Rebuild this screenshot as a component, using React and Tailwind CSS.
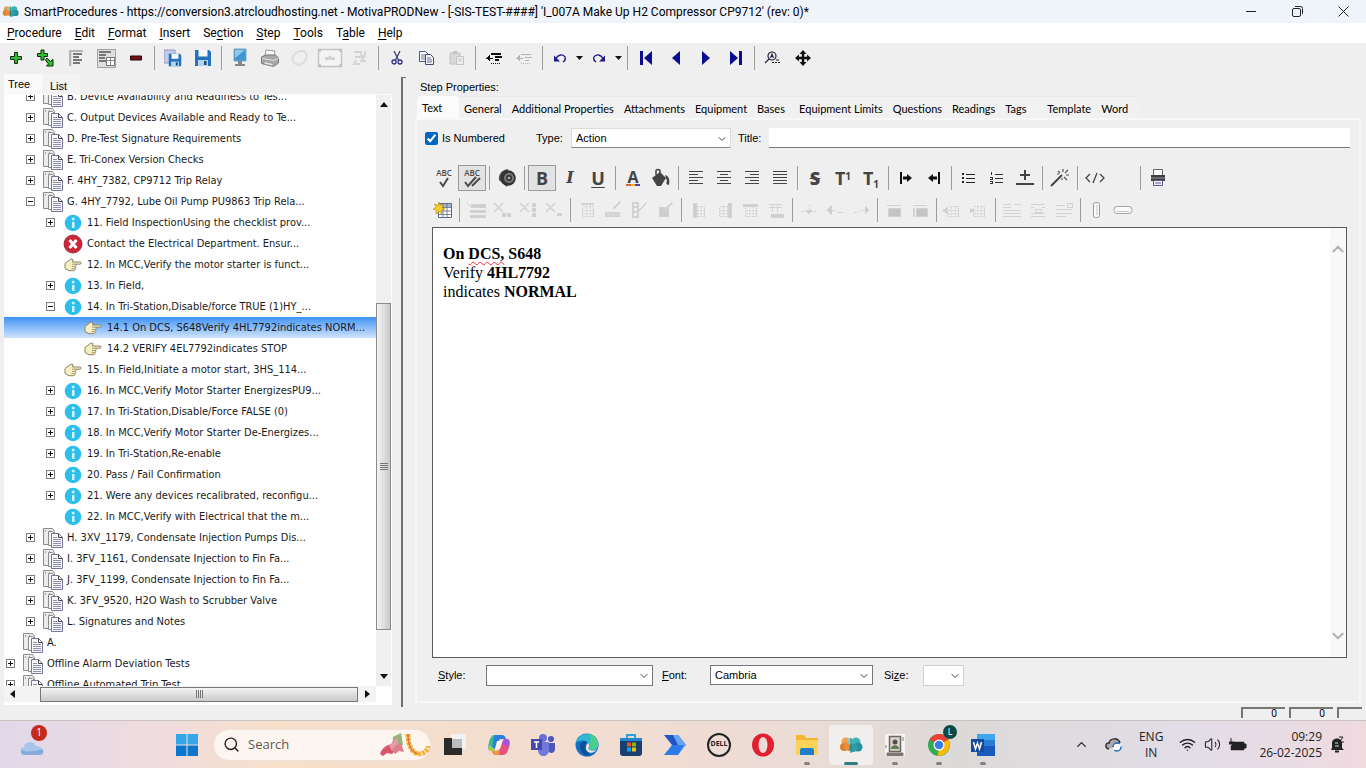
import React, { useState } from "react";
import { ChevronDown, ChevronUp, Search, Volume2, Wifi } from "lucide-react";

const Svg = ({ w = 20, h = 20, children, ...rest }) => (
  <svg width={w} height={h} viewBox={`0 0 ${w} ${h}`} fill="none" aria-hidden="true" {...rest}>
    {children}
  </svg>
);

/* ---------- app logo ---------- */

const AppLogo = ({ w = 16, h = 12 }) => (
  <svg width={w} height={h} viewBox="0 0 24 18" aria-hidden="true">
    <circle cx="7" cy="6" r="4.500" fill="#f0a04a" />
    <circle cx="5" cy="11" r="4" fill="#d9832f" />
    <circle cx="10" cy="10" r="5" fill="#f08c3c" />
    <circle cx="11" cy="5" r="3" fill="#7fd0c4" />
    <circle cx="17" cy="6" r="4.500" fill="#3fb3b8" />
    <circle cx="19" cy="11" r="4.500" fill="#2b8fa0" />
    <circle cx="14" cy="12" r="4" fill="#2d9fa8" />
    <path d="M12 2v15" stroke="#3a7d70" strokeWidth="1" />
  </svg>
);

/* ---------- main toolbar icons ---------- */

const Plus = () => (
  <Svg w={14} h={14}>
    <path d="M5.500 1.500h3v4h4v3h-4v4h-3v-4h-4v-3h4z" fill="#2fbf2f" stroke="#0b2b0b" strokeWidth="1" />
  </Svg>
);

const PlusSub = () => (
  <Svg w={20} h={18}>
    <path d="M5 1h3v3.500h3.500v3H8V11H5V7.500H1.500v-3H5z" fill="#2fbf2f" stroke="#0b2b0b" />
    <path d="M11 9l3.500 3.500L17 10.500v6.500h-6.500l2-2L9.500 11z" fill="#2fbf2f" stroke="#0b2b0b" />
  </Svg>
);

const Outline = () => (
  <Svg w={18} h={18} shapeRendering="crispEdges">
    <path d="M2 1h14v2H4v14H2z" fill="#b4b4b4" />
    <path d="M6 5h9M6 8h6M6 11h9M6 14h7" stroke="#777" strokeWidth="1.500" />
    <path d="M4 3v14" stroke="#ddd" />
  </Svg>
);

const OutlineTable = () => (
  <Svg w={20} h={20} shapeRendering="crispEdges">
    <path d="M1 1h18v18H1z" fill="#dedede" stroke="#a2a2a2" />
    <path d="M3 4h12M3 7h7M3 10h6M3 13h7" stroke="#777" strokeWidth="1.500" />
    <path d="M10.500 9.500h8v8h-8z" fill="#fff" stroke="#777" />
    <path d="M11 12.500h8M14.500 10v8" stroke="#888" />
  </Svg>
);

const Minus = () => (
  <Svg w={12} h={6}>
    <path d="M.5 1h11v4H.5z" fill="#7a0f1c" stroke="#2a0308" />
  </Svg>
);

const Floppy = ({ back }) => (
  <Svg w={18} h={18}>
    {back && <path d="M0 1h11v13H0z" fill="#c3cae8" stroke="#8f98c4" />}
    <g transform={back ? "translate(4 4) scale(.78)" : ""}>
      <path d="M1 1h14l2 2v14H1z" fill="#2272bd" />
      <path d="M4.500 1h9v6.500h-9z" fill="#f3f7fb" />
      <path d="M4 11h10v6H4z" fill="#b9d3ea" />
      <path d="M10 12h2.500v4H10z" fill="#174c80" />
    </g>
  </Svg>
);

const Monitor = () => (
  <Svg w={16} h={20}>
    <path d="M2 1h12v12H2z" fill="#3f95cf" stroke="#7aa7c4" />
    <path d="M3 2h10L3 10z" fill="#8cc8ec" />
    <path d="M6 13h4v3H6zM3 16h10v2H3z" fill="#7d8890" />
  </Svg>
);

const Printer = () => (
  <Svg w={20} h={20}>
    <path d="M6 2l9 1-1 6H5z" fill="#fdfdfd" stroke="#999" />
    <path d="M1.500 9l4-2h10l3 3v5l-5 3.500-12-3z" fill="#a9a9a9" stroke="#777" />
    <path d="M2 10.500l12 2 4.500-2.500" stroke="#e3e3e3" />
    <path d="M4 13.500l9 2v2.500l-9-2z" fill="#e9e9e9" stroke="#888" strokeWidth=".7" />
  </Svg>
);

const GhostRing = () => (
  <Svg w={20} h={20}>
    <path d="M4 15C0 9 6 2 14 3c6 5 1 13-6 14z" stroke="#dcdcdc" strokeWidth="2" />
  </Svg>
);

const GhostFrame = () => (
  <Svg w={26} h={20}>
    <path d="M1.500 1.500h23v17h-23z" stroke="#c4c4c4" strokeWidth="1.500" fill="#f4f4f4" />
    <path d="M8 9h3l2-2 2 2h3v3H8z" fill="#d2d2d2" />
    <path d="M3 1v3M23 1v3M3 16v3M23 16v3" stroke="#aaa" />
  </Svg>
);

const GhostSwap = () => (
  <Svg w={18} h={18}>
    <path d="M3 3h7v4M14 2v5h-4M4 8h9l-3 4h5M5 11l-2 4h6" stroke="#d4d4d4" strokeWidth="1.800" />
  </Svg>
);

const Cut = () => (
  <Svg w={12} h={16}>
    <path d="M3 1l4.500 9M9 1L4.500 10" stroke="#3b3f63" strokeWidth="1.300" />
    <circle cx="3" cy="12" r="2" stroke="#2a2a8c" strokeWidth="1.300" />
    <circle cx="9" cy="12" r="2" stroke="#2a2a8c" strokeWidth="1.300" />
  </Svg>
);

const Copy = () => (
  <Svg w={18} h={16}>
    <path d="M1.500 1.500h6l3 3v7h-9z" fill="#f4f4fb" stroke="#555a78" />
    <path d="M3 5h5M3 7h5M3 9h4" stroke="#7d82a0" />
    <path d="M7.500 4.500h5l3 3v7h-8z" fill="#f4f4fb" stroke="#44496c" />
    <path d="M9 8h4M9 10h5M9 12h5" stroke="#6b7095" />
  </Svg>
);

const Paste = () => (
  <Svg w={18} h={16}>
    <path d="M2 3h10v11H2z" fill="#d9d9d9" stroke="#c4c4c4" />
    <path d="M5 1h4v3H5z" fill="#c4c4c4" />
    <path d="M8.500 6.500h7v8h-7z" fill="#efefef" stroke="#c4c4c4" />
    <path d="M10 9h4M10 11h4" stroke="#c9c9c9" />
  </Svg>
);

const Outdent = ({ faded }) => (
  <Svg w={18} h={14} shapeRendering="crispEdges">
    <g stroke={faded ? "#b5b5b5" : "#111"}>
      <path d="M6 3h10M10 6h7M10 9h4" strokeWidth={faded ? "1" : "2"} />
      <path d="M6 12h9" strokeDasharray="1 1" />
      <path d="M1 7h7" />
      <path d="M4.500 4v6L1 7z" fill={faded ? "#b5b5b5" : "#111"} stroke="none" />
    </g>
  </Svg>
);

const Undo = ({ flip }) => (
  <Svg w={14} h={12} transform={flip ? "scale(-1 1)" : undefined}>
    <path d="M3 6.500C5 2.500 10 1.500 12 5c.8 2-.3 4-2 5" stroke="#1b1b8c" strokeWidth="1.400" />
    <path d="M1 3.500V9.500H7z" fill="#1b1b8c" />
  </Svg>
);

const Caret = () => (
  <Svg w={7} h={4}>
    <path d="M0 0h7L3.500 4z" fill="#111" />
  </Svg>
);

const NavFirst = () => (
  <Svg w={14} h={14}>
    <path d="M1 0h3v14H1zM13 0v14L5 7z" fill="#0c0c8f" />
  </Svg>
);
const NavPrev = () => (
  <Svg w={14} h={14}>
    <path d="M11 0v14L3 7z" fill="#0c0c8f" />
  </Svg>
);
const NavNext = () => (
  <Svg w={14} h={14}>
    <path d="M3 0v14l8-7z" fill="#0c0c8f" />
  </Svg>
);
const NavLast = () => (
  <Svg w={14} h={14}>
    <path d="M10 0h3v14h-3zM1 0v14l8-7z" fill="#0c0c8f" />
  </Svg>
);

const FindText = () => (
  <Svg w={18} h={14}>
    <circle cx="8" cy="5" r="4" stroke="#222" strokeWidth="1.200" />
    <path d="M5 8L1 12M6.500 7L8 3l1.500 4M7 5.500h2" stroke="#222255" strokeWidth="1.100" />
    <path d="M8 11.500h9" stroke="#222" strokeDasharray="2 1" />
    <path d="M12 9h3" stroke="#222" />
  </Svg>
);

const Move = () => (
  <Svg w={16} h={16}>
    <path d="M8 3v10M3 8h10" stroke="#111" strokeWidth="2.500" />
    <path d="M8 0l3.500 4h-7zM8 16l3.500-4h-7zM0 8l4-3.500v7zM16 8l-4-3.500v7z" fill="#111" />
  </Svg>
);

/* ---------- editor toolbar icons ---------- */

const Abc = ({ double }) => (
  <span className="flex flex-col items-center">
    <span className="text-[8px] leading-[7px] font-semibold text-[#4a4a4a]">ABC</span>
    <Svg w={20} h={12}>
      <path d={double ? "M3 6l3 4 8-9M10 10l8-8" : "M6 6l3 4 5-8"} stroke="#4a4a4a" strokeWidth="2" />
    </Svg>
  </span>
);

const Speaker = () => (
  <Svg w={18} h={18}>
    <path d="M10 0C4 1 0 5 1 11l8 7z" fill="#4f4f4f" />
    <circle cx="10" cy="9" r="7.800" fill="#333" />
    <circle cx="11" cy="9" r="5" fill="#7d7d7d" />
    <circle cx="11" cy="9" r="3.200" fill="#3a3a3a" />
    <circle cx="11" cy="9" r="1.300" fill="#a9a9a9" />
  </Svg>
);

const FontColor = () => (
  <span className="flex flex-col items-center">
    <span className="text-base leading-[14px] font-bold">A</span>
    <span className="flex h-[2px] w-[14px]">
      <span className="flex-1 bg-[#e0682a]" />
      <span className="flex-1 bg-[#f0b52c]" />
      <span className="flex-1 bg-[#5b3fb0]" />
    </span>
  </span>
);

const Bucket = () => (
  <Svg w={20} h={20}>
    <path d="M1 10l8-6 6 6-5 8H6z" fill="#444" />
    <path d="M5 7V3c0-2 4-2 4 0v5" stroke="#444" strokeWidth="1.500" />
    <path d="M14 7c4 1 5 5 4 10-3 0-3-3-2-4z" fill="#444" />
  </Svg>
);

const IndentBar = ({ flip }) => (
  <Svg w={14} h={14} transform={flip ? "scale(-1 1)" : undefined}>
    <path d="M1 1h2v12H1zM4 5.500h4V3l5 4-5 4V8.500H4z" fill="#111" />
  </Svg>
);

const Bullets = () => (
  <Svg w={14} h={12} shapeRendering="crispEdges">
    <path d="M4 2h9M4 6h9M4 10h9" stroke="#222" />
    <path d="M0 1h2v2H0zM0 5h2v2H0zM0 9h2v2H0z" fill="#222" />
  </Svg>
);

const Numbers = () => (
  <Svg w={14} h={12} shapeRendering="crispEdges">
    <path d="M5 2h8M5 6h8M5 10h8" stroke="#333" />
    <path d="M1.500 0v3M0 5h2v2H0M0 9h2v2H0" stroke="#333" />
  </Svg>
);

const PlusLine = () => (
  <Svg w={18} h={18} shapeRendering="crispEdges">
    <path d="M9 1v10M4 6h10M0 15h18" stroke="#444" strokeWidth="2" />
  </Svg>
);

const WandIcon = () => (
  <Svg w={20} h={20}>
    <path d="M1 18L12 7" stroke="#444" strokeWidth="2" />
    <path d="M13 1v3M8 3l2 2M18 2l-3 3M16 7h3M14 9l3 3M7 6h2M12 10v2" stroke="#555" strokeWidth="1.200" />
  </Svg>
);

const CodeIcon = () => (
  <Svg w={20} h={12}>
    <path d="M5 2L1 6l4 4M15 2l4 4-4 4M12 1L8 11" stroke="#444" strokeWidth="1.300" />
  </Svg>
);

const PrintSmall = () => (
  <Svg w={16} h={18}>
    <path d="M3.500.5h9v6h-9z" fill="#fff" stroke="#666" />
    <path d="M1 6h14v6H1z" fill="#3f3f3f" />
    <path d="M1 9h14" stroke="#9a9a9a" />
    <path d="M3.500 11.500h9v5h-9z" fill="#f2f2fb" stroke="#5c5a94" />
    <path d="M5 14h6" stroke="#5c5a94" />
  </Svg>
);

const NewTable = () => (
  <Svg w={20} h={18}>
    <path d="M5.500 2.500h13v14h-13z" fill="#fff" stroke="#5c6a86" />
    <path d="M6 3h12v3H6z" fill="#a9b7d6" />
    <path d="M6 6.500h12M6 10h12M6 13.500h12M10 3v13M14 3v13" stroke="#5c6a86" strokeWidth=".8" />
    <path d="M6 1l1.200 3.500L11 3 9 6.500l3 1.500-3.500 1L9 13l-3-2.500L3 13l.5-3.500L0 8l3-1.500L1.500 3 5 4.500z" fill="#f7cf2a" stroke="#b58a10" strokeWidth=".6" />
  </Svg>
);

const G = ({ children, w = 18 }) => (
  <Svg w={w} h={18} stroke="#d2d2d2" shapeRendering="crispEdges">
    {children}
  </Svg>
);
const cross = <path d="M1 2l9 9M10 2l-9 9" strokeWidth="1.500" shapeRendering="auto" />;
const grid = (
  <>
    <path d="M4.500 5.500h11v10h-11z" strokeDasharray="2 1" />
    <path d="M5 9.500h11M5 12.500h11M8.500 6v10M12.500 6v10" strokeDasharray="2 1" />
  </>
);

const tableTools = [
  [{ label: "Insert table", icon: <NewTable /> }],
  [
    { label: "Delete table", icon: <G w={20}><path d="M0 1l6 6" /><path d="M5 3h14v3H5zM4 9h15v2H4zM4 14h15v2H4z" fill="#cdcdcd" /></G> },
    { label: "Delete cells", icon: <G>{cross}<path d="M9 12h3v3H9zM14 12h3v3h-3z" fill="#cdcdcd" /></G> },
    { label: "Delete column", icon: <G>{cross}<path d="M13 2h3v3h-3zM13 7h3v3h-3zM13 12h3v3h-3z" fill="#cdcdcd" /></G> },
    { label: "Delete row", icon: <G>{cross}<path d="M12 12h4v2h-4z" fill="#cdcdcd" /></G> },
  ],
  [
    { label: "Table properties", icon: <G>{grid}<path d="M3 2.500h13" strokeWidth="2" /></G> },
    { label: "Row properties", icon: <G><path d="M1 11h14v4H1z" fill="#d6d6d6" /><path d="M9 8l7-7" strokeWidth="2" /></G> },
    { label: "Column properties", icon: <G><path d="M3 2h5v14H3zM3 6h5M3 11h5M9 10l7-8" strokeWidth="1.500" /></G> },
    { label: "Cell properties", icon: <G><path d="M3 6h9v9H3z" fill="#cdcdcd" /><path d="M8 10l8-8" strokeWidth="2" /></G> },
  ],
  [
    { label: "Column left", icon: <G>{grid}<path d="M4 2h3v14H4z" fill="#cdcdcd" /></G> },
    { label: "Column right", icon: <G>{grid}<path d="M13 2h3v14h-3z" fill="#cdcdcd" /></G> },
    { label: "Row above", icon: <G>{grid}<path d="M2 3h14v2H2z" fill="#cdcdcd" /></G> },
    { label: "Row below", icon: <G><path d="M2 3.500h13M2 6.500h13M5.500 3v8M10.500 3v8" /><path d="M4 13h12v3H4z" fill="#cdcdcd" /></G> },
  ],
  [
    { label: "Split cell", icon: <G><path d="M1 10h6M11 10h6M9 4v9" strokeDasharray="2 1" /><path d="M6 9h6l-3 4z" fill="#cdcdcd" /></G> },
    { label: "Merge left", icon: <G><path d="M2 9h7M11 11h6" /><path d="M5 5v8L1 9z" fill="#cdcdcd" /></G> },
    { label: "Merge right", icon: <G><path d="M2 11h6M8 9h7" strokeDasharray="2 1" /><path d="M13 5v8l4-4z" fill="#cdcdcd" /></G> },
  ],
  [
    { label: "Fill cell", icon: <G><path d="M3 7h12v8H3z" fill="#c4c4c4" /><path d="M2 4h14" /></G> },
    { label: "Fill row", icon: <G><path d="M5 7h11v8H5zM2 7h1v8H2z" fill="#c4c4c4" /><path d="M2 4h14" /></G> },
  ],
  [
    { label: "Distribute left", icon: <G w={20}><path d="M3 7v5L0 9.500z" fill="#cdcdcd" />{grid}</G> },
    { label: "Distribute right", icon: <G w={20}><path d="M1 7v5l3-2.500z" fill="#cdcdcd" />{grid}</G> },
  ],
  [
    { label: "Align top", icon: <G w={20}><path d="M1 3h8M1 6h8M1 9h18M1 12h18M1 15h18M12 3h7" /></G> },
    { label: "Align middle", icon: <G><path d="M2 3h14M2 6h3M13 6h3M6 8h6v3H6zM2 12h14M2 15h14" /></G> },
    { label: "Align bottom", icon: <G><path d="M1 4h9M1 8h16M1 12h16M1 15h10M12 2h5v4h-5z" /></G> },
  ],
  [
    { label: "Vertical field", icon: <Svg w={10} h={18}><rect x="1.500" y="1.500" width="6" height="15" rx="2" stroke="#9a9a9a" fill="#fafafa" /><path d="M5 4v10" stroke="#c4c4c4" /></Svg> },
    { label: "Horizontal field", icon: <Svg w={20} h={10}><rect x="1" y="1.500" width="18" height="7" rx="3" stroke="#a5a5a5" fill="#fafafa" /><path d="M4 6.500h12" stroke="#c4c4c4" /></Svg> },
  ],
];

const Lines = ({ d }) => (
  <Svg w={16} h={16} shapeRendering="crispEdges">
    <path d={d} fill="#444" />
  </Svg>
);

const textTools = [
  [
    { label: "Spell check", icon: <Abc /> },
    { label: "Check as you type", icon: <Abc double />, on: true },
  ],
  [{ label: "Read aloud", icon: <Speaker /> }],
  [
    { label: "Bold", icon: <span className="font-bold">B</span>, on: true },
    { label: "Italic", icon: <span className="font-['DejaVu_Serif',serif] text-base font-bold italic">I</span> },
    { label: "Underline", icon: <span className="font-bold underline underline-offset-2">U</span> },
  ],
  [
    { label: "Font colour", icon: <FontColor /> },
    { label: "Fill colour", icon: <Bucket /> },
  ],
  [
    { label: "Align left", icon: <Lines d="M1 1h14v1H1zM1 4h9v1H1zM1 7h14v1H1zM1 10h9v1H1zM1 13h14v1H1z" /> },
    { label: "Align centre", icon: <Lines d="M1 1h14v1H1zM4 4h8v1H4zM1 7h14v1H1zM4 10h8v1H4zM1 13h14v1H1z" /> },
    { label: "Align right", icon: <Lines d="M1 1h14v1H1zM6 4h9v1H6zM1 7h14v1H1zM6 10h9v1H6zM1 13h14v1H1z" /> },
    { label: "Justify", icon: <Lines d="M1 1h14v1H1zM1 4h14v1H1zM1 7h14v1H1zM1 10h14v1H1zM1 13h14v1H1z" /> },
  ],
  [
    { label: "Strikethrough", icon: <span className="font-extrabold line-through decoration-1">S</span> },
    { label: "Superscript", icon: <span className="font-bold">T<sup className="text-[10px]">1</sup></span> },
    { label: "Subscript", icon: <span className="font-bold">T<sub className="text-[10px]">1</sub></span> },
  ],
  [
    { label: "Indent", icon: <IndentBar /> },
    { label: "Outdent", icon: <IndentBar flip /> },
  ],
  [
    { label: "Bullets", icon: <Bullets /> },
    { label: "Numbering", icon: <Numbers /> },
    { label: "Insert line", icon: <PlusLine /> },
  ],
  [{ label: "Clean up", icon: <WandIcon /> }],
  [{ label: "Source", icon: <CodeIcon /> }, { label: "More" }],
  [{ label: "Print", icon: <PrintSmall /> }],
];

const mainTools = [
  [
    { label: "Add", icon: <Plus /> },
    { label: "Add sub step", icon: <PlusSub /> },
    { label: "Outline", icon: <Outline /> },
    { label: "Outline table", icon: <OutlineTable /> },
    { label: "Remove", icon: <Minus /> },
  ],
  [
    { label: "Save all", icon: <Floppy back /> },
    { label: "Save", icon: <Floppy /> },
  ],
  [
    { label: "Preview", icon: <Monitor /> },
    { label: "Print procedure", icon: <Printer /> },
    { label: "Link", icon: <GhostRing /> },
    { label: "Frame", icon: <GhostFrame /> },
    { label: "Swap", icon: <GhostSwap /> },
  ],
  [
    { label: "Cut", icon: <Cut /> },
    { label: "Copy", icon: <Copy /> },
    { label: "Paste", icon: <Paste /> },
  ],
  [
    { label: "Promote", icon: <Outdent /> },
    { label: "Demote", icon: <Outdent faded /> },
  ],
  [
    { label: "Undo", icon: <Undo />, menu: true },
    { label: "Redo", icon: <Undo flip />, menu: true },
  ],
  [
    { label: "First", icon: <NavFirst /> },
    { label: "Previous", icon: <NavPrev /> },
    { label: "Next", icon: <NavNext /> },
    { label: "Last", icon: <NavLast /> },
  ],
  [
    { label: "Find", icon: <FindText /> },
    { label: "Move", icon: <Move /> },
  ],
];

const Separator = () => (
  <span className="flex w-[7px] shrink-0 justify-center">
    <span className="h-6 w-px bg-[#9c9c9c]" />
  </span>
);

const Toolbar = ({ groups, size, className = "" }) => (
  <div role="toolbar" className={`flex items-center ${className}`}>
    {groups.map((group, index) => (
      <React.Fragment key={index}>
        {index > 0 && <Separator />}
        {group.map((tool) => (
          <React.Fragment key={tool.label}>
            <button
              type="button"
              aria-label={tool.label}
              className={`flex h-[26px] shrink-0 items-center justify-center ${tool.menu ? "w-7" : size} ${tool.on ? "border border-[#9a9a9a] bg-[#e2e2e2]" : ""}`}
            >
              {tool.icon}
            </button>
            {tool.menu && (
              <button type="button" aria-label={`${tool.label} list`} className="flex h-[26px] w-[11px] shrink-0 items-center justify-center">
                <Caret />
              </button>
            )}
          </React.Fragment>
        ))}
      </React.Fragment>
    ))}
  </div>
);

/* ---------- tree ---------- */

const SectionIcon = () => (
  <Svg w={20} h={20}>
    <path d="M.5.5h9l2 3v13H.5z" fill="#ececec" stroke="#8b8b8b" />
    <path d="M2 3h2M6 3h2" stroke="#555" strokeDasharray="1 1" />
    <path d="M5.500 3.500h4l2 2v12h-6z" fill="#f6f6f6" stroke="#8b8b8b" />
    <path d="M8.500 5.500h7l4 4v10h-11z" fill="#f7f7fc" stroke="#77779c" />
    <path d="M15.500 5.500v4h4" stroke="#444" />
    <path d="M10 9.500h4M10 11.500h8M10 13.500h8M10 15.500h8M10 17.500h8" stroke="#9090a8" />
  </Svg>
);

const InfoIcon = () => (
  <Svg w={18} h={18}>
    <circle cx="9" cy="9" r="8.300" fill="#2bbfee" />
    <path d="M8 8h2.500v6H8z" fill="#d8f3fd" />
    <circle cx="9.200" cy="5" r="1.500" fill="#d8f3fd" />
  </Svg>
);

const StopIcon = () => (
  <Svg w={20} h={20}>
    <circle cx="10" cy="10" r="9" fill="#cf2536" stroke="#8e1c28" strokeWidth=".8" />
    <path d="M6.500 6l7 8M13.500 6l-7 8" stroke="#fff" strokeWidth="3" />
  </Svg>
);

const HandIcon = () => (
  <Svg w={18} h={16}>
    <path d="M1 6.500L7 2l2 .5L8.500 5H16c1.500 0 1.500 2.200 0 2.200h-4.500c1 .5 1 2-.2 2.300.8.600.6 1.900-.5 2.200.5 1.200-.3 2-1.300 2H5L1 11.500z" fill="#f6efc0" stroke="#8a8468" />
    <path d="M8 7.200h3.500M8 9.500h3M7.500 11.700h3" stroke="#8a8468" strokeWidth=".8" />
  </Svg>
);

const rowIcons = { section: <SectionIcon />, info: <InfoIcon />, stop: <StopIcon />, hand: <HandIcon /> };

const treeRows = [
  [1, "+", "section", "B. Device Availability and Readiness to Tes..."],
  [1, "+", "section", "C. Output Devices Available and Ready to Te..."],
  [1, "+", "section", "D. Pre-Test Signature Requirements"],
  [1, "+", "section", "E. Tri-Conex Version Checks"],
  [1, "+", "section", "F. 4HY_7382, CP9712 Trip Relay"],
  [1, "-", "section", "G. 4HY_7792, Lube Oil Pump PU9863 Trip Rela..."],
  [2, "+", "info", "11. Field InspectionUsing the checklist prov..."],
  [2, "", "stop", "Contact the Electrical Department. Ensur..."],
  [2, "", "hand", "12. In MCC,Verify the motor starter is funct..."],
  [2, "+", "info", "13. In Field,"],
  [2, "-", "info", "14. In Tri-Station,Disable/force TRUE (1)HY_..."],
  [3, "", "hand", "14.1 On DCS, S648Verify 4HL7792indicates NORM..."],
  [3, "", "hand", "14.2 VERIFY 4EL7792indicates STOP"],
  [2, "", "hand", "15. In Field,Initiate a motor start, 3HS_114..."],
  [2, "+", "info", "16. In MCC,Verify Motor Starter EnergizesPU9..."],
  [2, "+", "info", "17. In Tri-Station,Disable/Force FALSE (0)"],
  [2, "+", "info", "18. In MCC,Verify Motor Starter De-Energizes..."],
  [2, "+", "info", "19. In Tri-Station,Re-enable"],
  [2, "+", "info", "20. Pass / Fail Confirmation"],
  [2, "+", "info", "21. Were any devices recalibrated, reconfigu..."],
  [2, "", "info", "22. In MCC,Verify with Electrical that the m..."],
  [1, "+", "section", "H. 3XV_1179, Condensate Injection Pumps Dis..."],
  [1, "+", "section", "I. 3FV_1161, Condensate Injection to Fin Fa..."],
  [1, "+", "section", "J. 3FV_1199, Condensate Injection to Fin Fa..."],
  [1, "+", "section", "K. 3FV_9520, H2O Wash to Scrubber Valve"],
  [1, "+", "section", "L. Signatures and Notes"],
  [0, "", "section", "A."],
  [0, "+", "section", "Offline Alarm Deviation Tests"],
  [0, "+", "section", "Offline Automated Trip Test"],
];

const indents = ["pl-0", "pl-5", "pl-10", "pl-15"];

const Expander = ({ sign }) => (
  <Svg w={9} h={9} shapeRendering="crispEdges">
    <path d="M.5.5h8v8h-8z" fill="#fff" stroke="#7d7d7d" />
    <path d={sign === "+" ? "M2 4.500h5M4.500 2v5" : "M2 4.500h5"} stroke="#111" />
  </Svg>
);

const Tree = () => {
  const [selected, setSelected] = useState(11);

  return (
    <ul role="tree" className="-mt-[9px] font-['DejaVu_Sans_Condensed','DejaVu_Sans',sans-serif] text-[11px] leading-[21px] text-[#1a1a1a]">
      {treeRows.map(([level, sign, icon, text], index) => (
        <li
          key={index}
          role="treeitem"
          aria-selected={selected === index}
          onClick={() => setSelected(index)}
          className={`flex h-[21px] items-center whitespace-nowrap ${indents[level]} ${selected === index ? "bg-linear-to-b from-[#3b93f5] to-[#cfe2fa]" : ""}`}
        >
          <span className="flex w-3 shrink-0 justify-center">{sign && <Expander sign={sign} />}</span>
          <span className="mr-1 ml-[7px] flex w-5 shrink-0 justify-center">{rowIcons[icon]}</span>
          {text}
        </li>
      ))}
    </ul>
  );
};

const TreePanel = () => (
  <section className="flex w-[401px] shrink-0 flex-col pt-px pl-1">
    <div role="tablist" className="flex h-5 items-stretch font-['Liberation_Sans',Arial,sans-serif] text-[11px]">
      <button role="tab" type="button" className="w-[38px] bg-[#fafafa] pl-1 text-left">
        Tree
      </button>
      <button role="tab" type="button" className="w-[38px] bg-[#f3f3f3] pt-1 pl-2 text-left">
        List
      </button>
    </div>
    <div className="mr-[9px] mb-[2px] flex min-h-0 flex-1 flex-col border-t border-[#fafafa] bg-white">
      <div className="flex min-h-0 flex-1">
        <div className="min-w-0 flex-1 overflow-hidden">
          <Tree />
        </div>
        <div className="mr-px flex w-[15px] flex-col items-center bg-[#f0f0f0]">
          <span className="flex h-[18px] items-center">
            <Svg w={8} h={5}><path d="M0 5h8L4 0z" fill="#111" /></Svg>
          </span>
          <span className="w-full grow-[191]" />
          <span className="flex w-full grow-[319] flex-col items-center justify-center gap-px border border-[#8a8a8a] bg-linear-to-r from-[#f4f4f4] to-[#c9c9c9]">
            <span className="h-px w-2 bg-[#777]" />
            <span className="h-px w-2 bg-[#777]" />
            <span className="h-px w-2 bg-[#777]" />
            <span className="h-px w-2 bg-[#777]" />
          </span>
          <span className="w-full grow-[38]" />
          <span className="flex h-[18px] items-center">
            <Svg w={8} h={5}><path d="M0 0h8L4 5z" fill="#111" /></Svg>
          </span>
        </div>
      </div>
      <div className="mr-4 mb-[3px] flex h-4 items-center bg-[#f3f3f3]">
        <span className="flex w-4 justify-center">
          <Svg w={5} h={8}><path d="M5 0v8L0 4z" fill="#111" /></Svg>
        </span>
        <span className="w-5" />
        <span className="flex h-[15px] flex-1 items-center justify-center gap-px border border-[#777] bg-linear-to-b from-[#f4f4f4] to-[#c9c9c9]">
          <span className="h-2 w-px bg-[#777]" />
          <span className="h-2 w-px bg-[#777]" />
          <span className="h-2 w-px bg-[#777]" />
          <span className="h-2 w-px bg-[#777]" />
        </span>
        <span className="flex w-[18px] justify-center">
          <Svg w={5} h={8}><path d="M0 0v8l5-4z" fill="#111" /></Svg>
        </span>
      </div>
    </div>
  </section>
);

/* ---------- step properties ---------- */

const tabs = ["Text", "General", "Additional Properties", "Attachments", "Equipment", "Bases", "Equipment Limits", "Questions", "Readings", "Tags", "Template", "Word"];

const Select = ({ id, options, className }) => (
  <span className={`relative flex ${className}`}>
    <select id={id} className="w-full appearance-none bg-white pl-1">
      {options.map((option) => (
        <option key={option}>{option}</option>
      ))}
    </select>
    <ChevronDown size={12} strokeWidth={2} className="pointer-events-none absolute top-1 right-[2px] text-[#444]" />
  </span>
);

const StepProperties = () => (
  <section className="flex min-w-0 flex-1 flex-col pt-[5px] pr-[5px] pl-[9px] font-['Liberation_Sans',Arial,sans-serif] text-[11px]">
    <h2 className="pl-[5px] leading-[18px]">Step Properties:</h2>
    <div role="tablist" className="flex h-[22px] items-stretch pl-[2px] font-['Lato','Liberation_Sans',sans-serif]">
      {tabs.map((tab, index) => (
        <button
          key={tab}
          role="tab"
          type="button"
          className={`min-w-[42px] px-[5px] text-left whitespace-nowrap ${index === 0 ? "rounded-t-sm bg-[#fbfbfb] pt-[2px]" : "border-t border-[#e9e9e9] bg-[#f1f1f1] pt-1"}`}
        >
          {tab}
        </button>
      ))}
    </div>
    <div className="mb-1 flex min-h-0 flex-1 flex-col border-2 border-[#f8f8f8] pr-[9px] pl-2">
      <div className="flex h-9 items-center">
        <label className="flex w-[111px] items-center gap-1">
          <input type="checkbox" defaultChecked className="h-[13px] w-[13px] accent-[#0067c0]" />
          Is Numbered
        </label>
        <label htmlFor="type" className="w-[35px]">
          Type:
        </label>
        <Select id="type" options={["Action", "Information", "Warning"]} className="h-5 w-40 border border-[#dadada] border-b-[#8a8a8a]" />
        <label htmlFor="title" className="ml-[7px] w-[31px]">
          Title:
        </label>
        <input id="title" type="text" className="h-5 min-w-0 flex-1 border-b border-[#777] bg-white px-1" />
      </div>
      <div className="flex flex-col gap-[2px] pt-[6px] pl-[5px] font-['Open_Sans','Noto_Sans',sans-serif] text-[18px] leading-none text-[#444]">
        <Toolbar groups={textTools} size="w-7" className="h-8" />
        <Toolbar groups={tableTools} size="w-[26px]" className="h-7" />
      </div>
      <div className="mt-[3px] mr-[3px] ml-[7px] flex min-h-0 flex-1 border border-[#5a5a5a] bg-white">
        <div
          contentEditable
          suppressContentEditableWarning
          spellCheck={false}
          role="textbox"
          aria-label="Step text"
          className="min-w-0 flex-1 px-[10px] py-4 font-['Liberation_Serif',serif] text-[16px] leading-[19px] text-black outline-none"
        >
          <p className="font-bold">
            On <span className="underline decoration-red-500 decoration-wavy decoration-1 underline-offset-2">DCS,</span> S648
          </p>
          <p>
            Verify <b>4HL7792</b>
          </p>
          <p>
            indicates <b>NORMAL</b>
          </p>
        </div>
        <div className="flex w-4 flex-col items-center justify-between bg-[#f8f8f8] py-3 text-[#b4b4b4]">
          <ChevronUp size={18} strokeWidth={3} />
          <ChevronDown size={18} strokeWidth={3} />
        </div>
      </div>
      <div className="flex h-[43px] items-start pt-[7px] pl-[13px]">
        <label htmlFor="style" className="w-12 leading-5">
          <u>S</u>tyle:
        </label>
        <Select id="style" options={["", "Heading", "Body"]} className="h-[21px] w-[167px] border border-[#777]" />
        <label htmlFor="font" className="ml-[9px] w-12 leading-5">
          <u>F</u>ont:
        </label>
        <Select id="font" options={["Cambria", "Arial", "Calibri"]} className="h-5 w-[163px] border border-[#777]" />
        <label htmlFor="size" className="ml-[11px] w-[39px] leading-5">
          Si<u>z</u>e:
        </label>
        <Select id="size" options={["", "10", "12"]} className="h-[21px] w-[41px] border border-[#d0d0d0]" />
      </div>
    </div>
  </section>
);

/* ---------- taskbar ---------- */

const Weather = () => (
  <Svg w={28} h={20}>
    <path d="M6 17c-6 0-6-6-1-7 1-6 10-7 12-1 7-1 9 8 2 8z" fill="#a9c6ea" />
    <path d="M6 18c-4 0-5-3-3-5 5 3 14 1 20-1 3 3 1 6-3 6z" fill="#86abda" />
  </Svg>
);

const WindowsLogo = () => (
  <Svg w={24} h={24}>
    <path d="M1 1h10.500v10.500H1zM12.500 1H23v10.500H12.500z" fill="#35a6ea" />
    <path d="M1 12.500h10.500V23H1zM12.500 12.500H23V23H12.500z" fill="#0a77cc" />
  </Svg>
);

const Flowers = () => (
  <Svg w={52} h={26}>
    <path d="M15 5l8-4 2 12-11 3z" fill="#8db878" />
    <path d="M2 22c2-6 7-10 14-10l2 6-4 4-5-1-4 3z" fill="#d8566c" />
    <path d="M11 14l8-9 2 12-7 2z" fill="#e79aa6" />
    <path d="M17 14l6-3 3 9-5-1-4 3-3-4z" fill="#df7d8e" />
    <path d="M30 2c0 10 3 18 10 20 5 0 10-3 10-8" stroke="#f5b13a" strokeWidth="5" strokeDasharray="3 1" />
    <path d="M30 2c0 10 3 18 10 20" stroke="#e0752a" strokeWidth="1.500" />
  </Svg>
);

const TaskView = () => (
  <Svg w={24} h={24}>
    <path d="M8 1h15v15H8z" fill="#f2f2f2" />
    <path d="M8 6h11v10H8z" fill="#bdbdbd" />
    <path d="M1 5h8v10h10v7H1z" fill="#2b2b2b" />
  </Svg>
);

const Copilot = () => (
  <Svg w={24} h={24}>
    <path d="M8 2h7c2 0 3 1 4 4h-4c-3 0-4 2-5 5l-2 5-1 2H4c-3 0-3-4-2-8 1-5 3-8 6-8z" fill="#2a7fe0" />
    <path d="M2 10c1-5 3-8 6-8-2 3-2 9-3 14-3 1-4-2-3-6z" fill="#3bbf8a" />
    <path d="M2 12c2 2 5 3 6 4l-1 2H4c-2 0-3-2-2-6z" fill="#a8cf4a" />
    <path d="M16 22H9c-2 0-3-1-4-4h4c3 0 4-2 5-5l2-5 1-2h3c3 0 3 4 2 8-1 5-3 8-6 8z" fill="#e8507f" />
    <path d="M16 8l1-2h3c3 0 3 4 2 8-2-2-5-2-7-3z" fill="#a851dc" />
    <path d="M9 22c-2 0-3-1-4-4h4c2 0 3-1 4-2l-1 6z" fill="#f5953b" />
    <path d="M10 8h5l-2 8H8z" fill="#fbeef0" />
  </Svg>
);

const Teams = () => (
  <Svg w={26} h={24}>
    <circle cx="13" cy="5" r="4" fill="#6a6fd6" />
    <circle cx="21" cy="6" r="3" fill="#4f55bb" />
    <path d="M8 9h11v8c0 8-11 8-11 0z" fill="#7378de" />
    <path d="M19 10h6v6c0 5-6 5-6 2z" fill="#4f55bb" />
    <path d="M1 6h11v11H1z" fill="#454ab0" />
    <path d="M4 9h5M6.500 9v6" stroke="#fff" strokeWidth="1.500" />
  </Svg>
);

const Edge = () => (
  <Svg w={24} h={24}>
    <circle cx="12" cy="12" r="11.500" fill="#1470c4" />
    <path d="M1 10C3 1 12-1 18 3c5 3 7 9 4 13-3 2-7 2-9 0 2-2 1-5-1-7-3-2-8-2-11 1z" fill="#2fb7d6" />
    <path d="M14 1c6 1 10 6 9 11-1 4-6 6-10 4 2-2 2-4 1-6 2-2 2-6 0-9z" fill="#49cf8e" />
    <path d="M5 13c0-4 4-6 7-4-4 4-2 10 4 13C10 25 5 19 5 13z" fill="#0b4f94" />
    <path d="M13 10c2 2 1 4 0 6 3 2 7 2 9 0-2 4-7 5-10 2-2-3-1-6 1-8z" fill="#f0e4dc" />
  </Svg>
);

const Store = () => (
  <Svg w={24} h={24}>
    <path d="M8 6V2h8v4" stroke="#2b9fe0" strokeWidth="2" />
    <path d="M1 5h22v15c0 2-1 3-3 3H4c-2 0-3-1-3-3z" fill="#173f70" />
    <path d="M1 5h22v3H1z" fill="#2186cf" />
    <path d="M8 9.500h4v4H8z" fill="#f25022" />
    <path d="M13 9.500h4v4h-4z" fill="#7fba00" />
    <path d="M8 14.500h4v4H8z" fill="#00a4ef" />
    <path d="M13 14.500h4v4h-4z" fill="#ffb900" />
  </Svg>
);

const PowerAutomate = () => (
  <Svg w={24} h={24}>
    <path d="M1 2h14l8 10H9z" fill="#1f55c4" />
    <path d="M15 2l8 10-8 10H9l6-10-5-10z" fill="#6aa4f2" />
    <path d="M9 12h12l-6 10H1z" fill="#2b7be8" />
  </Svg>
);

const Dell = () => (
  <span className="flex h-6 w-6 items-center justify-center rounded-full border-2 border-[#222] text-[7px] font-bold">DELL</span>
);

const Opera = () => (
  <Svg w={24} h={24}>
    <ellipse cx="12" cy="12" rx="11" ry="11.500" fill="#e0202f" />
    <ellipse cx="12" cy="12" rx="4.500" ry="8" fill="#efdcd8" />
  </Svg>
);

const Explorer = () => (
  <Svg w={24} h={24}>
    <path d="M1 2h8l2 3h12v17H1z" fill="#f3b62c" />
    <path d="M1 7h22v15H1z" fill="#fbd35b" />
    <path d="M5 22v-5c0-1 1-2 2-2h10c1 0 2 1 2 2v5z" fill="#1f7fc9" />
  </Svg>
);

const IdCard = () => (
  <Svg w={22} h={24}>
    <path d="M1 1h20v22H1z" fill="#f4f4f4" />
    <path d="M5.500 3.500h11v15h-11z" fill="#d9d4cb" stroke="#6b665e" strokeWidth="1.500" />
    <circle cx="11" cy="9" r="2.500" fill="#545048" />
    <path d="M7 16c0-5 8-5 8 0z" fill="#5d7a4e" />
    <path d="M3 20h16v2.500H3zM2 12v3M19 4v4" fill="#7d786f" stroke="#7d786f" />
  </Svg>
);

const Chrome = () => (
  <Svg w={24} h={24}>
    <circle cx="12" cy="12" r="11" fill="#34a853" />
    <path d="M12 12L2.500 6.500C7-1 17-1 21.500 6.500z" fill="#ea4335" />
    <path d="M12 12l9.500-5.500C25 13 21 23 11 23z" fill="#fbbc05" />
    <circle cx="12" cy="12" r="5.500" fill="#fff" />
    <circle cx="12" cy="12" r="4.300" fill="#3b7de8" />
  </Svg>
);

const Word = () => (
  <Svg w={26} h={24}>
    <path d="M7 1h18v22H7z" fill="#2b7cd3" />
    <path d="M7 1h18v6H7z" fill="#41a5ee" />
    <path d="M7 13h18v10H7z" fill="#185abd" />
    <path d="M1 6h13v13H1z" fill="#134a9c" />
    <path d="M3.500 9l2 7 2-6 2 6 2-7" stroke="#fff" strokeWidth="1.500" />
  </Svg>
);

const apps = [
  { label: "Task view", icon: <TaskView /> },
  { label: "Copilot", icon: <Copilot /> },
  { label: "Teams", icon: <Teams /> },
  { label: "Edge", icon: <Edge /> },
  { label: "Store", icon: <Store /> },
  { label: "Power Automate", icon: <PowerAutomate /> },
  { label: "Dell", icon: <Dell /> },
  { label: "Opera", icon: <Opera /> },
  { label: "File Explorer", icon: <Explorer />, mark: "w-[6px] bg-[#85807f]" },
  { label: "SmartProcedures", icon: <AppLogo w={24} h={18} />, mark: "w-[14px] bg-[#2f7f80]", active: true },
  { label: "Badge reader", icon: <IdCard />, mark: "w-[6px] bg-[#85807f]" },
  { label: "Chrome", icon: <Chrome />, mark: "w-[6px] bg-[#85807f]", badge: "L" },
  { label: "Word", icon: <Word />, mark: "w-[6px] bg-[#85807f]" },
];

const Taskbar = () => (
  <footer className="flex h-12 shrink-0 items-center border-t border-[#c9c2c0] bg-[linear-gradient(90deg,#e1d8ea,#f0dcdd_12%,#f6e0ca_20%,#f3ddcf_38%,#ecdcd6_58%,#dcdad8_70%,#dedce0_80%,#e3dde8_88%,#efdadf)] font-['Open_Sans','Noto_Sans',sans-serif] text-[12px] text-[#222]">
    <div className="flex min-w-0 flex-1 items-center">
      <button type="button" aria-label="Weather" className="relative ml-[19px] flex h-10 w-7 items-center pt-1">
        <Weather />
        <span className="absolute top-0 left-3 flex h-4 w-4 items-center justify-center rounded-full bg-[#c42b1c] text-[10px] text-white">1</span>
      </button>
      <button type="button" aria-label="Start" className="ml-32">
        <WindowsLogo />
      </button>
      <label className="mr-[2px] ml-[14px] flex h-8 w-[218px] shrink-0 items-center rounded-full border border-[#efe3da] bg-[#fdf6f0] pl-[9px]">
        <Search size={17} strokeWidth={2} className="shrink-0" />
        <input type="text" placeholder="Search" aria-label="Search" className="ml-2 min-w-0 flex-1 text-[13px] placeholder:text-[#5c5855] outline-none" />
        <Flowers />
      </label>
      <div className="flex">
        {apps.map((app) => (
          <button
            key={app.label}
            type="button"
            aria-label={app.label}
            className={`relative flex h-10 w-11 shrink-0 items-center justify-center ${app.active ? "rounded bg-[#f2eeee]" : ""}`}
          >
            {app.icon}
            {app.badge && <span className="absolute top-0 right-1 flex h-[14px] w-[14px] items-center justify-center rounded-full bg-[#0d4a45] text-[9px] text-white">{app.badge}</span>}
            {app.mark && <span className={`absolute bottom-0 h-[3px] rounded-full ${app.mark}`} />}
          </button>
        ))}
      </div>
    </div>
    <div className="flex items-center pr-5">
      <ChevronUp size={15} strokeWidth={2} />
      <Svg w={18} h={16} className="ml-4">
        <path d="M4 12C-1 11 1 5 4 6c1-5 9-6 11 0" stroke="#333" strokeWidth="1.500" fill="#a9a9a9" />
        <circle cx="12" cy="10" r="4" stroke="#1c6fc0" strokeWidth="1.500" fill="#fff" strokeDasharray="9 3" />
      </Svg>
      <span className="ml-4 text-center leading-4">
        ENG
        <br />
        IN
      </span>
      <Wifi size={17} strokeWidth={2} className="ml-4" />
      <Volume2 size={17} strokeWidth={1.500} className="ml-2" />
      <Svg w={18} h={14} className="ml-2">
        <path d="M4.500 4.500h10v7h-12v-4" fill="#222" stroke="#222" strokeWidth="1.500" />
        <path d="M15 6h2v4h-2zM2 0v4M0 4h5v2H0z" fill="#222" stroke="#222" />
      </Svg>
      <span className="ml-3 text-right leading-4">
        09:29
        <br />
        26-02-2025
      </span>
      <Svg w={16} h={18} className="ml-2">
        <path d="M2 12V7c0-6 10-6 10 0v5l2 2H1z" fill="#222" />
        <path d="M5 15.500h4" stroke="#222" strokeWidth="2" />
        <path d="M9 1h4L9.500 6H14" stroke="#222" />
        <path d="M5 7h3M5 10h4" stroke="#ddd" />
      </Svg>
    </div>
  </footer>
);

/* ---------- window ---------- */

const menus = [
  ["", "P", "rocedure"],
  ["", "E", "dit"],
  ["", "F", "ormat"],
  ["", "I", "nsert"],
  ["Se", "c", "tion"],
  ["", "S", "tep"],
  ["", "T", "ools"],
  ["T", "a", "ble"],
  ["", "H", "elp"],
];

const App = () => {
  return (
    <div className="flex h-screen flex-col overflow-hidden bg-[#efefef] text-black">
      <header className="flex h-[23px] shrink-0 items-center bg-[#eff4fa] pl-[2px] font-['Roboto','Open_Sans',sans-serif] text-[12px]">
        <AppLogo w={17} h={13} />
        <h1 className="ml-[5px] truncate">SmartProcedures - https://conversion3.atrcloudhosting.net - MotivaPRODNew - [-SIS-TEST-####] 'I_007A Make Up H2 Compressor CP9712' (rev: 0)*</h1>
        <div className="ml-auto flex">
          <button type="button" aria-label="Minimize" className="flex w-[46px] justify-center">
            <Svg w={10} h={10}><path d="M0 5.500h10" stroke="#222" /></Svg>
          </button>
          <button type="button" aria-label="Restore" className="flex w-[46px] justify-center">
            <Svg w={11} h={11}>
              <rect x=".5" y="2.500" width="8" height="8" rx="1.500" stroke="#222" />
              <path d="M3 .5h5.500a2 2 0 0 1 2 2V8" stroke="#222" />
            </Svg>
          </button>
          <button type="button" aria-label="Close" className="flex w-[46px] justify-center">
            <Svg w={11} h={11}><path d="M.5.5l10 10M10.500.5l-10 10" stroke="#222" /></Svg>
          </button>
        </div>
      </header>
      <nav className="flex h-5 shrink-0 items-center gap-[13px] bg-white pl-[7px] font-['Roboto','Open_Sans',sans-serif] text-[12px]">
        {menus.map(([before, key, after]) => (
          <button key={key + after} type="button">
            {before}
            <u className="underline-offset-2">{key}</u>
            {after}
          </button>
        ))}
      </nav>
      <Toolbar groups={mainTools} size="w-[30px]" className="h-[30px] shrink-0 pl-px" />
      <main className="flex min-h-0 flex-1">
        <TreePanel />
        <div className="mt-1 w-[5px] shrink-0 border-t border-l-2 border-[#6f6f6f]" />
        <StepProperties />
      </main>
      <div className="flex h-[13px] shrink-0 justify-end gap-1 pr-1 text-[10px]">
        <span className="h-[11px] w-[44px] overflow-hidden border-t-2 border-l-2 border-[#777] pr-2 text-right leading-[9px]">0</span>
        <span className="h-[11px] w-[44px] overflow-hidden border-t-2 border-l-2 border-[#777] pr-2 text-right leading-[9px]">0</span>
        <span className="h-[11px] w-[25px] border-t-2 border-l-2 border-[#777]" />
      </div>
      <Taskbar />
    </div>
  );
};

export default App;
